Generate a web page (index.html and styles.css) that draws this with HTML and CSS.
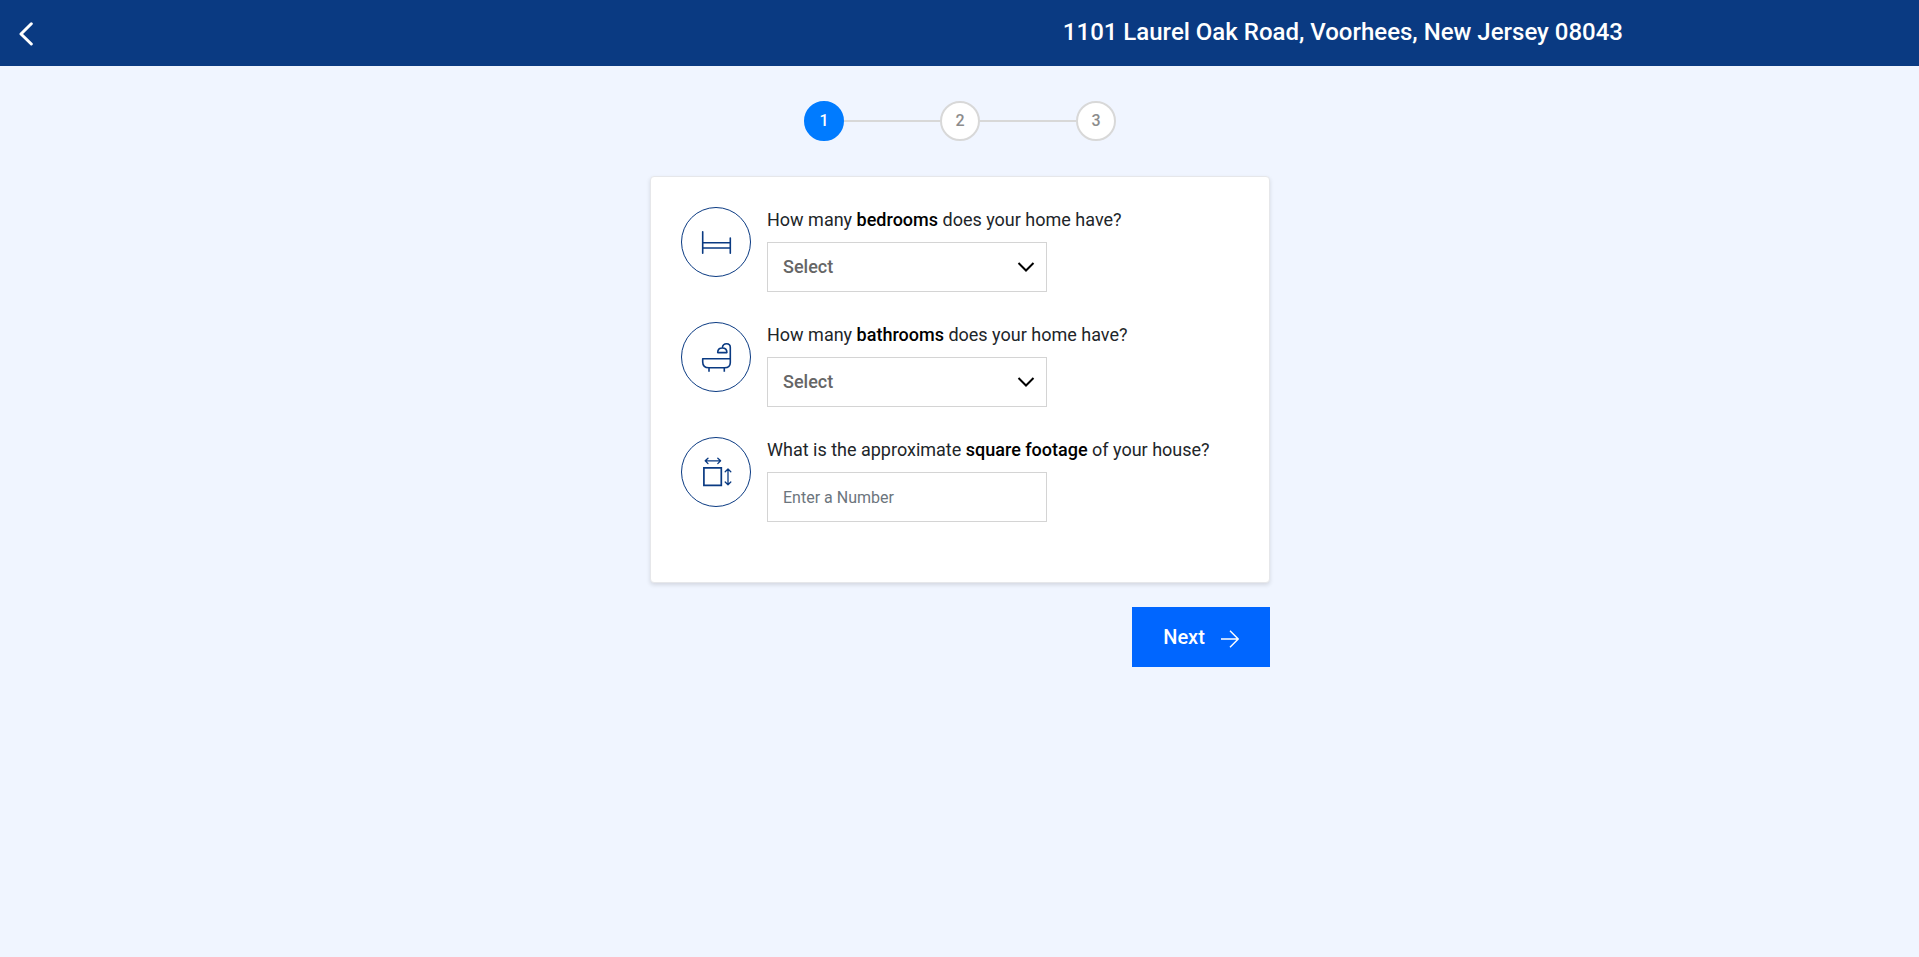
FILE: index.html
```html
<!DOCTYPE html>
<html lang="en">
<head>
<meta charset="utf-8">
<title>Home details</title>
<link rel="stylesheet" href="styles.css">
</head>
<body>
<header class="topbar">
  <a class="back" aria-label="Back"><svg width="16" height="26" viewBox="0 0 16 26" fill="none" stroke="#fff" stroke-width="3" stroke-linecap="round" stroke-linejoin="round"><path d="M13.3 3.8 3 14 13.3 24"/></svg></a>
  <h1 class="address">1101 Laurel Oak Road, Voorhees, New Jersey 08043</h1>
</header>
<main class="content">
  <div class="steps">
    <span class="step active">1</span><span class="line"></span><span class="step">2</span><span class="line"></span><span class="step">3</span>
  </div>
  <section class="card">
    <div class="row">
      <div class="icon"><svg width="70" height="70" viewBox="0 0 70 70" fill="none" stroke="#0a3a82"><circle cx="35" cy="35" r="34.5"/><path stroke-width="1.6" stroke-linecap="round" d="M21.7 24.7V46.2M49.3 31V46.2M21.7 35.7H49.3M21.7 41H49.3"/></svg></div>
      <div class="field">
        <div class="question">How many <b>bedrooms</b> does your home have?</div>
        <div class="box"><span>Select</span><svg width="18" height="12" viewBox="0 0 18 12" fill="none" stroke="#000" stroke-width="2"><path d="M1.5 2 9 9.5 16.5 2"/></svg></div>
      </div>
    </div>
    <div class="row">
      <div class="icon"><svg width="70" height="70" viewBox="0 0 70 70" fill="none" stroke="#0a3a82"><circle cx="35" cy="35" r="34.5"/><path stroke-width="1.6" stroke-linejoin="round" d="M21.7 36.8H49.3V40.5Q49.3 45.8 43.5 45.8H28Q21.7 45.8 21.7 40ZM28 45.8V49.8M43.3 45.8V49.8M49.3 36.8V25.5Q49.3 21.8 45.6 21.8Q41.8 21.8 41.4 25.7M36.7 30.6H45.9Q45.9 26 41.3 26Q36.7 26 36.7 30.6Z"/></svg></div>
      <div class="field">
        <div class="question">How many <b>bathrooms</b> does your home have?</div>
        <div class="box"><span>Select</span><svg width="18" height="12" viewBox="0 0 18 12" fill="none" stroke="#000" stroke-width="2"><path d="M1.5 2 9 9.5 16.5 2"/></svg></div>
      </div>
    </div>
    <div class="row">
      <div class="icon"><svg width="70" height="70" viewBox="0 0 70 70" fill="none" stroke="#0a3a82"><circle cx="35" cy="35" r="34.5"/><path stroke-width="1.7" d="M22.9 30.9H40.3V48.3H22.9Z"/><path stroke-width="1.3" stroke-linecap="round" stroke-linejoin="round" d="M24.5 23.8H39.2M27 21.2 24.2 23.8 27 26.6M36.8 21.2 39.6 23.8 36.8 26.6M47 32.5V47.5M44.2 34.8 47 32 49.8 34.8M44.2 45 47 47.8 49.8 45"/></svg></div>
      <div class="field">
        <div class="question">What is the approximate <b>square footage</b> of your house?</div>
        <input class="box" type="text" placeholder="Enter a Number">
      </div>
    </div>
  </section>
  <button class="next">Next<svg width="18" height="18" viewBox="0 0 18 18" fill="none" stroke="#fff" stroke-width="1.4"><path d="M0 9H17M9 .8 17.2 9 9 17.2"/></svg></button>
</main>
</body>
</html>
```
FILE: styles.css
```css
* { box-sizing: border-box; }
body { margin: 0; min-height: 957px; background: #f0f5ff; font-family: Roboto, sans-serif; color: #212529; }
.topbar { height: 66px; background: #0a3a82; color: #fff; display: flex; justify-content: space-between; align-items: flex-start; padding: 0 296px 0 18px; }
.back { padding-top: 20px; line-height: 0; }
.address { margin: 0; padding-top: 18px; font-size: 24px; font-weight: 500; line-height: 28px; }
.content { width: 621px; margin: 0 auto; padding: 35px 0 0 1px; display: flex; flex-direction: column; }
.steps { display: flex; align-items: center; align-self: center; }
.step { width: 40px; height: 40px; border: 2px solid #d8d8d8; border-radius: 50%; background: #fff; color: #8c8c8c; font-size: 16px; font-weight: 500; line-height: 35px; text-align: center; }
.step.active { background: #007bff; border-color: #007bff; color: #fff; }
.line { width: 96px; height: 2px; background: #d8d8d8; }
.card { height: 407px; margin-top: 35px; padding: 30px; background: #fff; border: 1px solid #e6e7ea; border-radius: 4px; box-shadow: 0 2px 4px rgba(0, 0, 0, .12); display: flex; flex-direction: column; gap: 30px; }
.row { display: flex; gap: 16px; height: 85px; }
.icon { line-height: 0; }
.question { font-size: 18px; line-height: 26px; margin-bottom: 9px; white-space: nowrap; }
.question b { font-weight: 500; color: #000; }
.box { width: 280px; height: 50px; border: 1px solid #d4d4d4; background: #fff; padding: 0 11px 0 15px; display: flex; justify-content: space-between; align-items: center; font: 500 18px Roboto, sans-serif; color: #666; }
.box span { padding-bottom: 2px; }
input.box { font-size: 16px; font-weight: 400; }
.box::placeholder { color: #6c757d; opacity: 1; }
.next { align-self: flex-end; width: 138px; height: 60px; margin-top: 24px; padding: 0; border: 0; background: #06f; color: #fff; font: 500 20px Roboto, sans-serif; display: flex; align-items: center; justify-content: center; gap: 16px; }
.next svg { margin-top: 3px; }
```
